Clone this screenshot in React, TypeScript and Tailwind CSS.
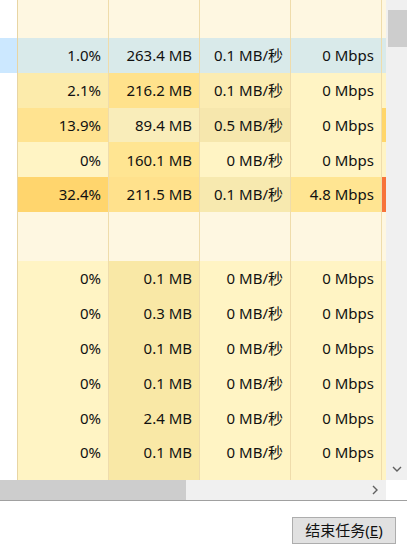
import type { ReactNode } from 'react';

type Row = {
  cells: [string, string, string, string];
  bg: [string, string, string, string];
  strip: string;
  left?: string;
};

const LOW = 'bg-[#fff4c4]';
const MEMLOW = 'bg-[#f9e8a6]';

const TOP: Row[] = [
  {
    cells: ['1.0%', '263.4 MB', '0.1 MB/秒', '0 Mbps'],
    bg: ['bg-[#d9eaea]', 'bg-[#d9eaea]', 'bg-[#d9eaea]', 'bg-[#d9eaea]'],
    strip: 'bg-[#d9eaea]',
    left: 'bg-[#cce8ff]',
  },
  {
    cells: ['2.1%', '216.2 MB', '0.1 MB/秒', '0 Mbps'],
    bg: ['bg-[#fcebab]', 'bg-[#ffe28c]', 'bg-[#fbecb2]', LOW],
    strip: LOW,
  },
  {
    cells: ['13.9%', '89.4 MB', '0.5 MB/秒', '0 Mbps'],
    bg: ['bg-[#ffe390]', 'bg-[#f9edba]', 'bg-[#f6e7ad]', LOW],
    strip: 'bg-[#ffd66b]',
  },
  {
    cells: ['0%', '160.1 MB', '0 MB/秒', '0 Mbps'],
    bg: [LOW, 'bg-[#ffe592]', LOW, LOW],
    strip: LOW,
  },
  {
    cells: ['32.4%', '211.5 MB', '0.1 MB/秒', '4.8 Mbps'],
    bg: ['bg-[#ffd56d]', 'bg-[#ffe18c]', 'bg-[#f7e9af]', 'bg-[#ffe592]'],
    strip: 'bg-[#f7733a]',
  },
];

const BOTTOM: [string, string][] = [
  ['0%', '0.1 MB'],
  ['0%', '0.3 MB'],
  ['0%', '0.1 MB'],
  ['0%', '0.1 MB'],
  ['0%', '2.4 MB'],
  ['0%', '0.1 MB'],
];

function Cell({ bg, children }: { bg: string; children?: ReactNode }) {
  return (
    <div className={`flex w-[91px] shrink-0 items-center justify-end border-r border-[#efdcab] pr-[7px] ${bg}`}>
      {children}
    </div>
  );
}

function Line({ row, h = 'h-[35px]' }: { row: Row; h?: string }) {
  return (
    <div className={`flex ${h}`}>
      <div className={`w-[18px] shrink-0 border-r border-[#e8d5a4] ${row.left ?? 'bg-white'}`} />
      {row.cells.map((c, i) => (
        <Cell key={i} bg={row.bg[i]}>
          {c}
        </Cell>
      ))}
      <div className={`w-[5px] shrink-0 ${row.strip}`} />
    </div>
  );
}

const blank = (bg: string): Row => ({ cells: ['', '', '', ''], bg: [bg, bg, bg, bg], strip: bg });

export default function App() {
  return (
    <div
      className="flex h-[556px] w-[407px] flex-col overflow-hidden bg-white text-[15px] text-[#111]"
      style={{ fontFamily: '"Segoe UI", "Noto Sans", "Noto Sans CJK SC", sans-serif' }}
    >
      <div className="flex h-[480px]">
        <div className="flex w-[386px] flex-col overflow-hidden">
          <Line row={blank('bg-[#fef7e1]')} h="h-[38px]" />
          {TOP.map((r, i) => (
            <Line key={i} row={r} />
          ))}
          <Line row={blank('bg-[#fef7e1]')} h="h-[49px]" />
          {BOTTOM.map(([a, b], i) => (
            <Line
              key={i}
              row={{ cells: [a, b, '0 MB/秒', '0 Mbps'], bg: [LOW, MEMLOW, LOW, LOW], strip: LOW }}
            />
          ))}
          <Line row={{ cells: ['', '', '', ''], bg: [LOW, MEMLOW, LOW, LOW], strip: LOW }} h="h-[10px]" />
        </div>
        <div className="flex w-[21px] flex-col bg-[#f0f0f0]">
          <div className="mt-[10px] ml-[2px] h-[37px] bg-[#cdcdcd]" />
          <div className="flex-1" />
          <div className="flex h-[20px] items-center justify-center pb-[2px]">
            <svg width="10" height="6" viewBox="0 0 10 6">
              <path d="M1 1 L5 5 L9 1" fill="none" stroke="#606060" strokeWidth="1.4" />
            </svg>
          </div>
        </div>
      </div>
      <div className="flex h-[21px] border-b border-[#a0a0a0]">
        <div className="flex w-[386px] bg-[#f0f0f0]">
          <div className="w-[186px] bg-[#cdcdcd]" />
          <div className="flex-1" />
          <div className="flex w-[20px] items-center justify-center pr-[2px]">
            <svg width="6" height="10" viewBox="0 0 6 10">
              <path d="M1 1 L5 5 L1 9" fill="none" stroke="#606060" strokeWidth="1.4" />
            </svg>
          </div>
        </div>
        <div className="flex-1 bg-white" />
      </div>
      <div className="flex flex-1 items-start justify-end pt-[16px] pr-[11px]">
        <button className="flex h-[27px] w-[104px] items-center justify-center border border-[#adadad] bg-[#e1e1e1] text-[15px] text-[#111]">
          结束任务(<span className="underline">E</span>)
        </button>
      </div>
    </div>
  );
}
